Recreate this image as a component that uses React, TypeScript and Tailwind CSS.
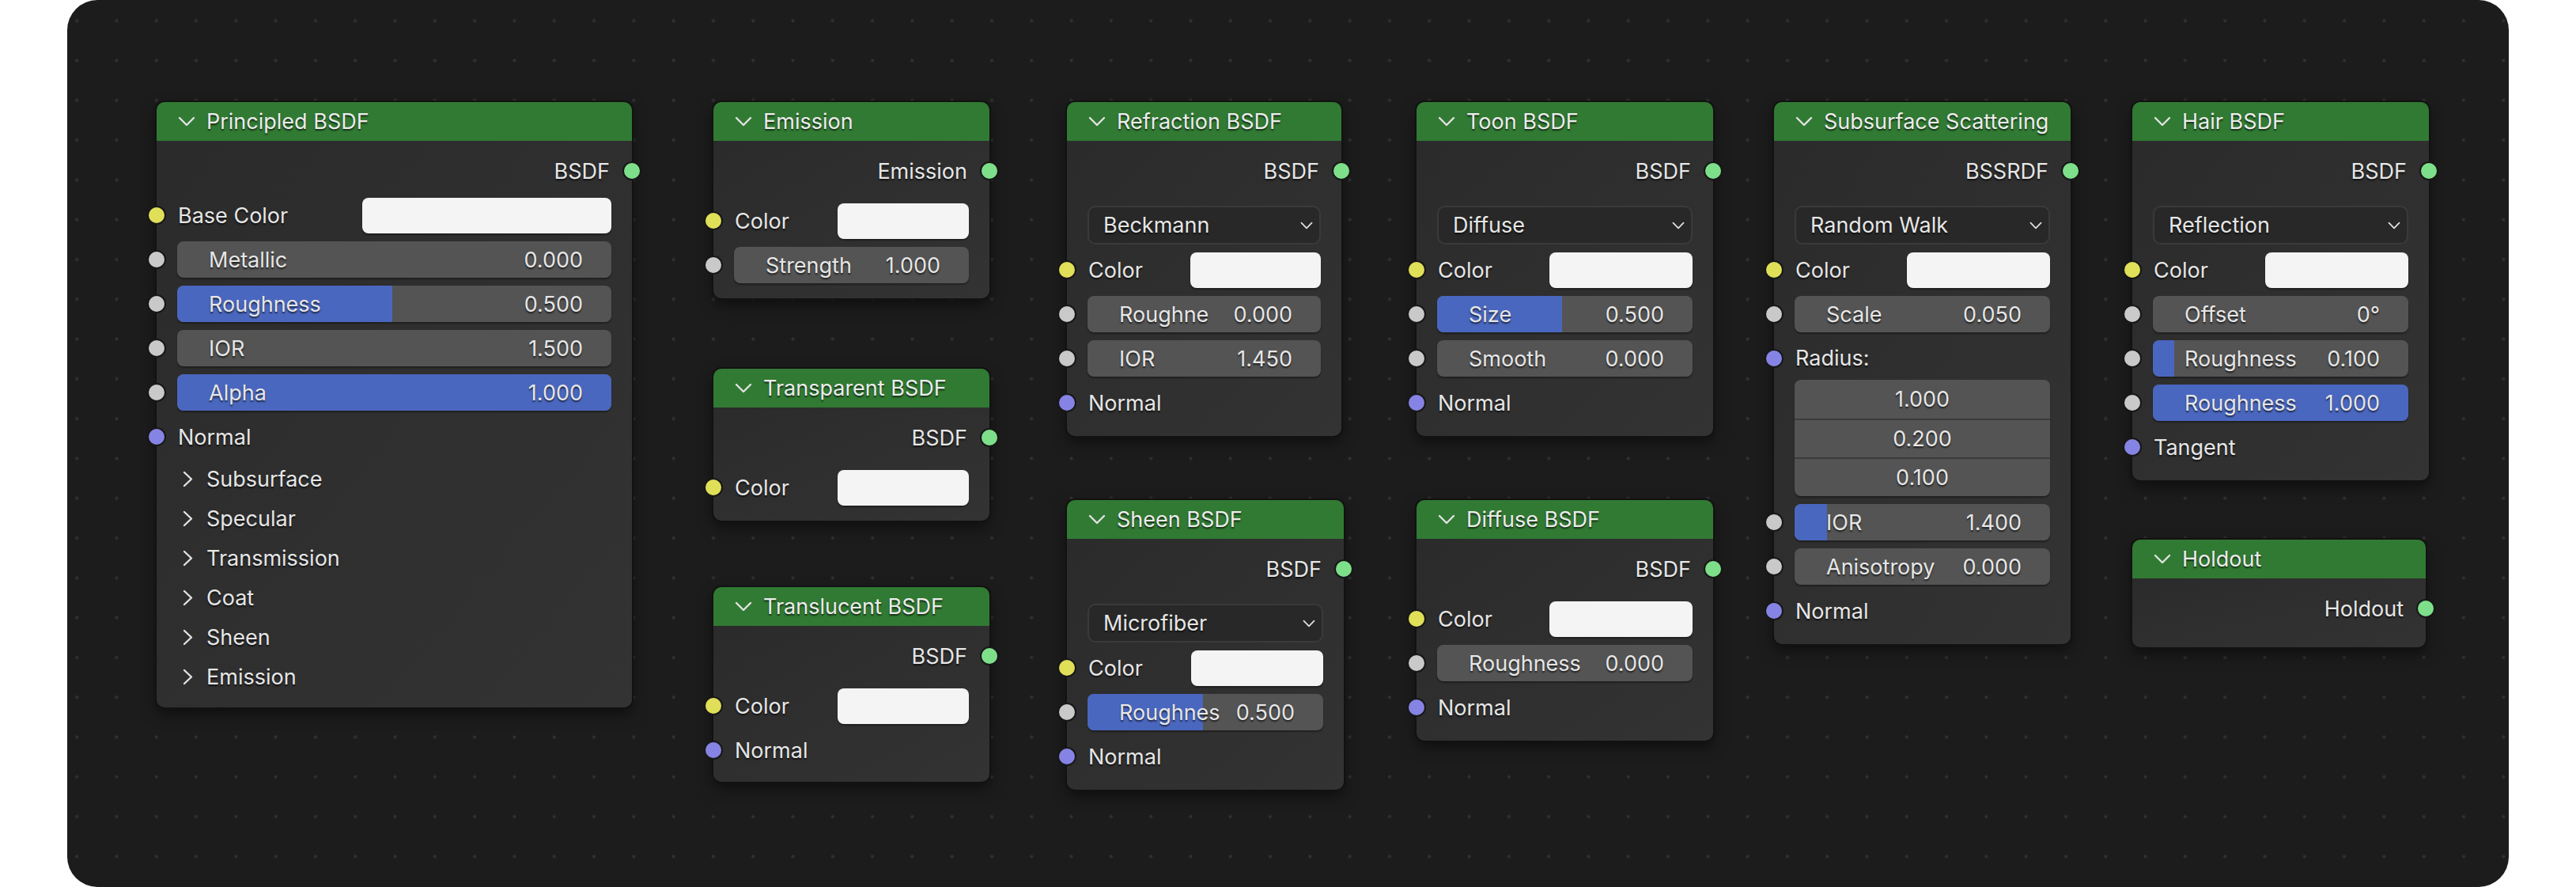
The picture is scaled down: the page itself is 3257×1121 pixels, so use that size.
import clsx from "clsx";

type Socket = "yellow" | "gray" | "purple" | "green";

type Row =
  | { kind: "output"; label: string }
  | { kind: "color"; label: string; swatch?: string }
  | { kind: "slider"; label: string; value: string; fill?: number }
  | { kind: "input"; label: string; socket: Socket; height?: string }
  | { kind: "menu"; label: string }
  | { kind: "vector"; values: string[] }
  | { kind: "panel"; label: string }
  | { kind: "gap"; height: string };

type NodeSpec = {
  title: string;
  position: string;
  width: string;
  rows: Row[];
  bottom?: string;
};

const SOCKET_BG: Record<Socket, string> = {
  yellow: "bg-[#e0df58]",
  gray: "bg-[#c9c9c9]",
  purple: "bg-[#8584e4]",
  green: "bg-[#7edf8a]",
};

const NODES: NodeSpec[] = [
  {
    title: "Principled BSDF",
    position: "left-[113px] top-[129px]",
    width: "w-[601px]",
    rows: [
      { kind: "output", label: "BSDF" },
      { kind: "color", label: "Base Color", swatch: "w-[57.4%]" },
      { kind: "slider", label: "Metallic", value: "0.000" },
      { kind: "slider", label: "Roughness", value: "0.500", fill: 49.6 },
      { kind: "slider", label: "IOR", value: "1.500" },
      { kind: "slider", label: "Alpha", value: "1.000", fill: 100 },
      { kind: "input", label: "Normal", socket: "purple" },
      { kind: "panel", label: "Subsurface" },
      { kind: "panel", label: "Specular" },
      { kind: "panel", label: "Transmission" },
      { kind: "panel", label: "Coat" },
      { kind: "panel", label: "Sheen" },
      { kind: "panel", label: "Emission" },
    ],
  },
  {
    title: "Emission",
    position: "left-[817px] top-[129px]",
    width: "w-[349px]",
    rows: [
      { kind: "output", label: "Emission" },
      { kind: "gap", height: "h-[7px]" },
      { kind: "color", label: "Color" },
      { kind: "slider", label: "Strength", value: "1.000" },
    ],
  },
  {
    title: "Transparent BSDF",
    position: "left-[817px] top-[466px]",
    width: "w-[349px]",
    rows: [
      { kind: "output", label: "BSDF" },
      { kind: "gap", height: "h-[7px]" },
      { kind: "color", label: "Color" },
    ],
  },
  {
    title: "Translucent BSDF",
    position: "left-[817px] top-[742px]",
    width: "w-[349px]",
    bottom: "pb-[12px]",
    rows: [
      { kind: "output", label: "BSDF" },
      { kind: "gap", height: "h-[7px]" },
      { kind: "color", label: "Color" },
      { kind: "input", label: "Normal", socket: "purple" },
    ],
  },
  {
    title: "Refraction BSDF",
    position: "left-[1264px] top-[129px]",
    width: "w-[347px]",
    rows: [
      { kind: "output", label: "BSDF" },
      { kind: "menu", label: "Beckmann" },
      { kind: "color", label: "Color" },
      { kind: "slider", label: "Roughne", value: "0.000" },
      { kind: "slider", label: "IOR", value: "1.450" },
      { kind: "input", label: "Normal", socket: "purple" },
    ],
  },
  {
    title: "Sheen BSDF",
    position: "left-[1264px] top-[632px]",
    width: "w-[350px]",
    rows: [
      { kind: "output", label: "BSDF" },
      { kind: "menu", label: "Microfiber" },
      { kind: "color", label: "Color" },
      { kind: "slider", label: "Roughnes", value: "0.500", fill: 49 },
      { kind: "input", label: "Normal", socket: "purple" },
    ],
  },
  {
    title: "Toon BSDF",
    position: "left-[1706px] top-[129px]",
    width: "w-[375px]",
    rows: [
      { kind: "output", label: "BSDF" },
      { kind: "menu", label: "Diffuse" },
      { kind: "color", label: "Color" },
      { kind: "slider", label: "Size", value: "0.500", fill: 49 },
      { kind: "slider", label: "Smooth", value: "0.000" },
      { kind: "input", label: "Normal", socket: "purple" },
    ],
  },
  {
    title: "Diffuse BSDF",
    position: "left-[1706px] top-[632px]",
    width: "w-[375px]",
    rows: [
      { kind: "output", label: "BSDF" },
      { kind: "gap", height: "h-[7px]" },
      { kind: "color", label: "Color" },
      { kind: "slider", label: "Roughness", value: "0.000" },
      { kind: "input", label: "Normal", socket: "purple" },
    ],
  },
  {
    title: "Subsurface Scattering",
    position: "left-[2158px] top-[129px]",
    width: "w-[375px]",
    rows: [
      { kind: "output", label: "BSSRDF" },
      { kind: "menu", label: "Random Walk" },
      { kind: "color", label: "Color" },
      { kind: "slider", label: "Scale", value: "0.050" },
      { kind: "input", label: "Radius:", socket: "purple", height: "h-[55px]" },
      { kind: "vector", values: ["1.000", "0.200", "0.100"] },
      { kind: "gap", height: "h-[5px]" },
      { kind: "slider", label: "IOR", value: "1.400", fill: 12.7 },
      { kind: "slider", label: "Anisotropy", value: "0.000" },
      { kind: "input", label: "Normal", socket: "purple" },
    ],
  },
  {
    title: "Hair BSDF",
    position: "left-[2611px] top-[129px]",
    width: "w-[375px]",
    rows: [
      { kind: "output", label: "BSDF" },
      { kind: "menu", label: "Reflection" },
      { kind: "color", label: "Color" },
      { kind: "slider", label: "Offset", value: "0°" },
      { kind: "slider", label: "Roughness", value: "0.100", fill: 8.5 },
      { kind: "slider", label: "Roughness", value: "1.000", fill: 100 },
      { kind: "input", label: "Tangent", socket: "purple" },
    ],
  },
  {
    title: "Holdout",
    position: "left-[2611px] top-[682px]",
    width: "w-[371px]",
    bottom: "pb-[21px]",
    rows: [{ kind: "output", label: "Holdout" }],
  },
];

function SocketDot({ color, side }: { color: Socket; side: "left" | "right" }) {
  return (
    <span
      className={clsx(
        "absolute top-1/2 size-[24px] -translate-y-1/2 rounded-full border-2 border-[#171717]",
        SOCKET_BG[color],
        side === "left" ? "-left-[12px]" : "-right-[12px]",
      )}
    />
  );
}

function ChevronDown({ className }: { className?: string }) {
  return (
    <svg className={className} viewBox="0 0 22 13" fill="none">
      <polyline
        points="2,2 11,11 20,2"
        stroke="#e2e2e2"
        strokeWidth="2.4"
        strokeLinecap="round"
        strokeLinejoin="round"
      />
    </svg>
  );
}

function ChevronRight() {
  return (
    <svg className="h-[21px] w-[13px]" viewBox="0 0 13 21" fill="none">
      <polyline
        points="2,2 11,10.5 2,19"
        stroke="#e2e2e2"
        strokeWidth="2.4"
        strokeLinecap="round"
        strokeLinejoin="round"
      />
    </svg>
  );
}

function NodeRow({ row }: { row: Row }) {
  switch (row.kind) {
    case "output":
      return (
        <div className="relative flex h-[56px] items-center justify-end pr-[28px]">
          <span>{row.label}</span>
          <SocketDot color="green" side="right" />
        </div>
      );
    case "color":
      return (
        <div className="relative flex h-[56px] items-center px-[26px]">
          <span className="flex-1 pl-[1px]">{row.label}</span>
          <span
            className={clsx(
              "h-[45px] rounded-[8px] bg-[#f4f4f4] shadow-[0_2px_2px_rgba(0,0,0,0.35)]",
              row.swatch ?? "w-[56%]",
            )}
          />
          <SocketDot color="yellow" side="left" />
        </div>
      );
    case "slider":
      return (
        <div className="relative flex h-[56px] items-center px-[26px]">
          <div className="relative h-[46px] w-full overflow-hidden rounded-[8px] bg-[#545454] shadow-[0_2px_2px_rgba(0,0,0,0.35)]">
            {row.fill ? (
              <div
                className="absolute inset-y-0 left-0 bg-[#4a67bf]"
                style={{ width: `${row.fill}%` }}
              />
            ) : null}
            <div className="relative flex h-full items-center justify-between pl-[40px] pr-[36px] whitespace-nowrap">
              <span>{row.label}</span>
              <span>{row.value}</span>
            </div>
          </div>
          <SocketDot color="gray" side="left" />
        </div>
      );
    case "input":
      return (
        <div className={clsx("relative flex items-center pl-[27px]", row.height ?? "h-[56px]")}>
          <span>{row.label}</span>
          <SocketDot color={row.socket} side="left" />
        </div>
      );
    case "menu":
      return (
        <div className="px-[26px] pt-[16px] pb-[4px]">
          <div className="flex h-[49px] items-center justify-between rounded-[10px] border-2 border-[#3a3a3a] bg-[#282828] pl-[18px] pr-[8px]">
            <span>{row.label}</span>
            <ChevronDown className="h-[10px] w-[16px]" />
          </div>
        </div>
      );
    case "vector":
      return (
        <div className="px-[26px]">
          <div className="overflow-hidden rounded-[8px] bg-[#545454] shadow-[0_2px_2px_rgba(0,0,0,0.35)]">
            {row.values.map((value, index) => (
              <div
                className={clsx(
                  "flex h-[49px] items-center justify-center",
                  index > 0 && "border-t-2 border-[#3b3b3b]",
                )}
                key={`${value}-${index}`}
              >
                {value}
              </div>
            ))}
          </div>
        </div>
      );
    case "panel":
      return (
        <div className="flex h-[50px] items-center gap-[17px] pl-[33px]">
          <ChevronRight />
          <span>{row.label}</span>
        </div>
      );
    case "gap":
      return <div className={row.height} />;
  }
}

function ShaderNode({ node }: { node: NodeSpec }) {
  return (
    <div
      className={clsx(
        "absolute rounded-[10px] shadow-[0_0_0_2px_#121212,0_8px_18px_rgba(0,0,0,0.5)]",
        node.position,
        node.width,
      )}
    >
      <div className="flex h-[49px] items-center gap-[14px] rounded-t-[10px] bg-[#317a33] pl-[27px] text-[#ececec]">
        <ChevronDown className="h-[13px] w-[22px]" />
        <span>{node.title}</span>
      </div>
      <div
        className={clsx(
          "rounded-b-[10px] bg-linear-to-br from-[#2b2b2b] to-[#333333] pt-[10px]",
          node.bottom ?? "pb-[14px]",
        )}
      >
        {node.rows.map((row, index) => (
          <NodeRow key={`${row.kind}-${index}`} row={row} />
        ))}
      </div>
    </div>
  );
}

export default function App() {
  return (
    <div className="flex h-[1121px] w-full justify-center bg-white">
      <div className="relative h-[1121px] w-[3087px] overflow-hidden rounded-[38px] bg-[#1c1c1c] bg-[radial-gradient(circle,#303030_1.8px,transparent_2.4px)] bg-[size:50.3px_50.3px] bg-[position:-13px_1px] font-['Inter','Noto_Sans',sans-serif] text-[27px] leading-none text-[#e6e6e6] [text-shadow:0_2px_2px_rgba(0,0,0,0.65)]">
        {NODES.map((node) => (
          <ShaderNode key={node.title} node={node} />
        ))}
      </div>
    </div>
  );
}
